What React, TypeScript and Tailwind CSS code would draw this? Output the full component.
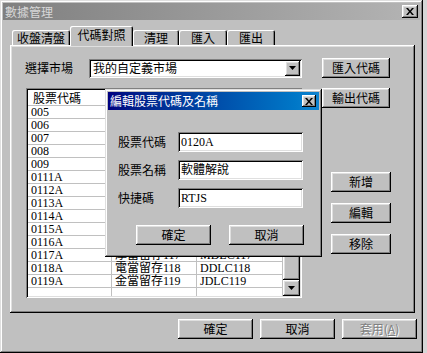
const raised =
  'shadow-[inset_-1px_-1px_0_#000,inset_1px_1px_0_#fff,inset_-2px_-2px_0_#808080,inset_2px_2px_0_#dfdfdf]';
const sunken =
  'shadow-[inset_1px_1px_0_#808080,inset_-1px_-1px_0_#fff,inset_2px_2px_0_#000,inset_-2px_-2px_0_#dfdfdf]';
const cjk = "font-['Noto_Sans_CJK_TC',sans-serif]";
const mixed = "font-['Liberation_Serif','Noto_Sans_CJK_TC',serif]";

const rows: [string, string, string][] = [
  ['005', '', ''],
  ['006', '', ''],
  ['007', '', ''],
  ['008', '', ''],
  ['009', '', ''],
  ['0111A', '', ''],
  ['0112A', '', ''],
  ['0113A', '', ''],
  ['0114A', '', ''],
  ['0115A', '', ''],
  ['0116A', '', ''],
  ['0117A', '厚當留存117', 'MDLC117'],
  ['0118A', '電當留存118', 'DDLC118'],
  ['0119A', '金當留存119', 'JDLC119'],
];

function Btn({ label, w, disabled }: { label: React.ReactNode; w: string; disabled?: boolean }) {
  return (
    <div
      className={`${w} h-[20px] bg-[#c0c0c0] ${raised} flex items-center justify-center text-[12px] leading-none ${cjk} ${
        disabled ? 'text-[#808080] [text-shadow:1px_1px_0_#fff]' : 'text-black'
      }`}
    >
      {label}
    </div>
  );
}

function CloseX({ w, h }: { w: string; h: string }) {
  return (
    <div className={`${w} ${h} bg-[#c0c0c0] ${raised} flex items-center justify-center`}>
      <svg width="8" height="7" viewBox="0 0 8 7">
        <path d="M0 0h2l2 2.5L6 0h2L5 3.5 8 7H6L4 4.5 2 7H0l3-3.5z" fill="#000" />
      </svg>
    </div>
  );
}

function Tab({ label, w, active }: { label: string; w: string; active?: boolean }) {
  return (
    <div
      className={`${w} ${
        active ? 'h-[20px] relative z-10 pb-[3px]' : 'h-[16px]'
      } bg-[#c0c0c0] rounded-t-[2px] shadow-[inset_1px_1px_0_#fff,inset_-1px_0_0_#000,inset_-2px_0_0_#808080] flex items-center justify-center text-[12px] leading-none text-black ${cjk}`}
    >
      {label}
    </div>
  );
}

function Field({ label, value }: { label: string; value: string }) {
  return (
    <div className="flex items-center h-[20px]">
      <div className={`w-[60px] text-[12px] leading-none ${cjk}`}>{label}</div>
      <div className={`w-[125px] h-[20px] bg-white ${sunken} flex items-center pl-[3px] text-[12px] leading-none ${mixed}`}>
        {value}
      </div>
    </div>
  );
}

export default function App() {
  return (
    <div className="relative w-[427px] h-[353px] bg-[#d6d6d6] overflow-hidden">
      {/* main window */}
      <div className="w-[423px] h-[353px] bg-[#c0c0c0] p-[3px] flex flex-col shadow-[inset_-1px_-1px_0_#000,inset_1px_1px_0_#dfdfdf,inset_-2px_-2px_0_#808080,inset_2px_2px_0_#fff]">
        <div className="h-[17px] flex items-center justify-between bg-gradient-to-r from-[#808080] to-[#b4b4b4] pl-[2px] pr-[2px]">
          <span className={`text-[12px] leading-none text-[#d8d8d8] ${cjk}`}>數據管理</span>
          <CloseX w="w-[16px]" h="h-[13px]" />
        </div>

        {/* tabs */}
        <div className="mt-[6px] h-[20px] pl-[9px] flex items-end">
          <Tab label="收盤清盤" w="w-[58px]" />
          <Tab label="代碼對照" w="w-[63px]" active />
          <Tab label="清理" w="w-[46px]" />
          <Tab label="匯入" w="w-[48px]" />
          <Tab label="匯出" w="w-[48px]" />
        </div>

        {/* tab panel */}
        <div className={`-mt-px ml-[7px] w-[405px] h-[268px] bg-[#c0c0c0] ${raised} pt-[13px] pl-[15px] flex`}>
          <div className="w-[277px] flex flex-col">
            <div className="h-[20px] flex items-center">
              <span className={`w-[64px] text-[12px] leading-none ${cjk}`}>選擇市場</span>
              <div className={`w-[213px] h-[19px] bg-white ${sunken} flex items-center justify-between pl-[4px] pr-[2px]`}>
                <span className={`text-[12px] leading-none ${cjk}`}>我的自定義市場</span>
                <div className={`w-[15px] h-[15px] bg-[#c0c0c0] ${raised} flex items-center justify-center`}>
                  <svg width="7" height="4" viewBox="0 0 7 4">
                    <path d="M0 0h7L3.5 4z" fill="#000" />
                  </svg>
                </div>
              </div>
            </div>

            {/* list */}
            <div className={`mt-[10px] ml-px w-[276px] h-[210px] bg-white ${sunken} p-[2px] flex`}>
              <div className="w-[255px] flex flex-col">
                <div className="h-[16px] flex shrink-0 border-b border-[#c0c0c0]">
                  <div className={`w-[84px] pl-[5px] border-r border-[#c0c0c0] text-[12px] leading-[15px] ${cjk}`}>股票代碼</div>
                  <div className="w-[85px] border-r border-[#c0c0c0]" />
                  <div className="w-[86px]" />
                </div>
                {rows.map((r, i) => (
                  <div key={i} className={`h-[13px] flex shrink-0 border-b border-[#c0c0c0] text-[12px] leading-[12px] ${mixed}`}>
                    <div className="w-[84px] pl-[3px] border-r border-[#c0c0c0]">{r[0]}</div>
                    <div className="w-[85px] pl-[3px] border-r border-[#c0c0c0]">{r[1]}</div>
                    <div className="w-[86px] pl-[3px] border-r border-[#c0c0c0]">{r[2]}</div>
                  </div>
                ))}
                <div className="flex-1 flex">
                  <div className="w-[84px] border-r border-[#c0c0c0]" />
                  <div className="w-[85px] border-r border-[#c0c0c0]" />
                  <div className="w-[86px] border-r border-[#c0c0c0]" />
                </div>
              </div>
              <div className="w-[17px] flex flex-col bg-[#e0e0e0]">
                <div className={`h-[16px] bg-[#c0c0c0] ${raised} flex items-center justify-center`}>
                  <svg width="7" height="4" viewBox="0 0 7 4">
                    <path d="M0 4h7L3.5 0z" fill="#000" />
                  </svg>
                </div>
                <div className="flex-1 flex flex-col justify-end">
                  <div className={`h-[90px] bg-[#c0c0c0] ${raised}`} />
                </div>
                <div className={`h-[16px] bg-[#c0c0c0] ${raised} flex items-center justify-center`}>
                  <svg width="7" height="4" viewBox="0 0 7 4">
                    <path d="M0 0h7L3.5 4z" fill="#000" />
                  </svg>
                </div>
              </div>
            </div>
          </div>

          {/* right buttons */}
          <div className="ml-[20px] flex flex-col">
            <Btn label="匯入代碼" w="w-[68px]" />
            <div className="mt-[10px]">
              <Btn label="輸出代碼" w="w-[68px]" />
            </div>
            <div className="mt-[64px] ml-[9px] flex flex-col gap-[11px]">
              <Btn label="新增" w="w-[60px]" />
              <Btn label="編輯" w="w-[60px]" />
              <Btn label="移除" w="w-[60px]" />
            </div>
          </div>
        </div>

        {/* bottom buttons */}
        <div className="mt-[6px] pr-[3px] flex justify-end gap-[7px]">
          <Btn label="確定" w="w-[75px]" />
          <Btn label="取消" w="w-[75px]" />
          <Btn
            label={
              <span>
                套用(<span className="underline">A</span>)
              </span>
            }
            w="w-[75px]"
            disabled
          />
        </div>
      </div>

      {/* edit dialog */}
      <div className="absolute left-[105px] top-[89px] w-[217px] h-[168px] bg-[#c0c0c0] p-[3px] flex flex-col shadow-[inset_-1px_-1px_0_#000,inset_1px_1px_0_#dfdfdf,inset_-2px_-2px_0_#808080,inset_2px_2px_0_#fff]">
        <div className="h-[18px] flex items-center justify-between bg-gradient-to-r from-[#000080] to-[#1084d0] pl-[2px] pr-[3px]">
          <span className={`text-[12px] leading-none text-white ${cjk}`}>編輯股票代碼及名稱</span>
          <CloseX w="w-[14px]" h="h-[12px]" />
        </div>
        <div className="mt-[22px] pl-[10px] flex flex-col gap-[8px]">
          <Field label="股票代碼" value="0120A" />
          <Field label="股票名稱" value="軟體解說" />
          <Field label="快捷碼" value="RTJS" />
        </div>
        <div className="mt-[17px] pl-[28px] flex gap-[18px]">
          <Btn label="確定" w="w-[75px]" />
          <Btn label="取消" w="w-[75px]" />
        </div>
      </div>
    </div>
  );
}
